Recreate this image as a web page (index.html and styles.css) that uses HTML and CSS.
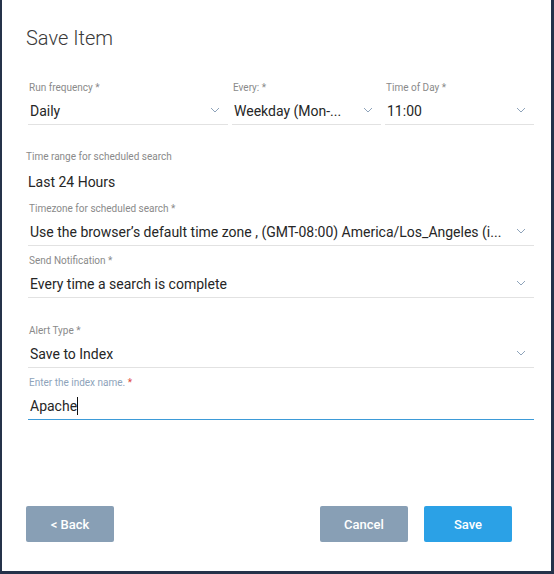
FILE: index.html
```html
<!DOCTYPE html>
<html>
<head>
<meta charset="utf-8">
<link rel="stylesheet" href="styles.css">
</head>
<body>
<div class="dialog">
  <h1 class="title">Save Item</h1>

  <div class="row3">
    <div class="field">
      <div class="label">Run frequency <span class="req">*</span></div>
      <div class="control">
        <span class="value">Daily</span>
        <svg class="chev" width="10" height="6" viewBox="0 0 10 6"><path d="M1 1 L5 5 L9 1" fill="none" stroke="#8ea3ba" stroke-width="1"/></svg>
      </div>
    </div>
    <div class="field">
      <div class="label">Every: <span class="req">*</span></div>
      <div class="control">
        <span class="value">Weekday (Mon-...</span>
        <svg class="chev" width="10" height="6" viewBox="0 0 10 6"><path d="M1 1 L5 5 L9 1" fill="none" stroke="#8ea3ba" stroke-width="1"/></svg>
      </div>
    </div>
    <div class="field">
      <div class="label">Time of Day <span class="req">*</span></div>
      <div class="control">
        <span class="value">11:00</span>
        <svg class="chev" width="10" height="6" viewBox="0 0 10 6"><path d="M1 1 L5 5 L9 1" fill="none" stroke="#8ea3ba" stroke-width="1"/></svg>
      </div>
    </div>
  </div>

  <div class="static">
    <div class="label">Time range for scheduled search</div>
    <div class="static-value">Last 24 Hours</div>
  </div>

  <div class="field field-tz">
    <div class="label">Timezone for scheduled search <span class="req">*</span></div>
    <div class="control">
      <span class="value">Use the browser’s default time zone , (GMT-08:00) America/Los_Angeles (i...</span>
      <svg class="chev" width="10" height="6" viewBox="0 0 10 6"><path d="M1 1 L5 5 L9 1" fill="none" stroke="#8ea3ba" stroke-width="1"/></svg>
    </div>
  </div>

  <div class="field field-notify">
    <div class="label">Send Notification <span class="req">*</span></div>
    <div class="control">
      <span class="value">Every time a search is complete</span>
      <svg class="chev" width="10" height="6" viewBox="0 0 10 6"><path d="M1 1 L5 5 L9 1" fill="none" stroke="#8ea3ba" stroke-width="1"/></svg>
    </div>
  </div>

  <div class="field field-alert">
    <div class="label">Alert Type <span class="req">*</span></div>
    <div class="control">
      <span class="value">Save to Index</span>
      <svg class="chev" width="10" height="6" viewBox="0 0 10 6"><path d="M1 1 L5 5 L9 1" fill="none" stroke="#8ea3ba" stroke-width="1"/></svg>
    </div>
  </div>

  <div class="field field-index focused">
    <div class="label label-focus">Enter the index name. <span class="req-red">*</span></div>
    <div class="control">
      <span class="value">Apache<span class="caret"></span></span>
    </div>
  </div>

  <div class="footer">
    <button class="btn btn-grey">&lt; Back</button>
    <div class="footer-right">
      <button class="btn btn-grey">Cancel</button>
      <button class="btn btn-blue">Save</button>
    </div>
  </div>
</div>
</body>
</html>
```

FILE: styles.css
```css
html, body {
  margin: 0;
  padding: 0;
  background: #25324a;
}

body {
  width: 554px;
  height: 574px;
  font-family: Roboto, "Liberation Sans", sans-serif;
}

.dialog {
  box-sizing: border-box;
  width: 549px;
  height: 571px;
  margin-left: 2px;
  background: #ffffff;
  padding: 26px 17px 0 24px;
  display: flex;
  flex-direction: column;
}

.title {
  margin: 0;
  font-size: 20px;
  line-height: 24px;
  font-weight: 300;
  color: #3a3a3a;
}

.row3 {
  margin-top: 31px;
  margin-left: 2px;
  display: grid;
  grid-template-columns: 200px 149px 149px;
  column-gap: 4px;
}

.field {
  margin-left: 2px;
  border-bottom: 1px solid #e2e2e2;
  padding-bottom: 1px;
}

.row3 .field {
  margin-left: 0;
}

.label {
  font-size: 10px;
  line-height: 14px;
  color: #8a8a8a;
  padding-left: 1px;
  white-space: nowrap;
}

.req {
  color: #8a8a8a;
}

.label-focus {
  color: #8ea3ba;
}

.req-red {
  color: #e0483e;
}

.control {
  margin-top: 4px;
  height: 24px;
  display: flex;
  align-items: center;
}

.value {
  flex: 1;
  min-width: 0;
  font-size: 14px;
  line-height: 24px;
  color: #262626;
  padding-left: 2px;
  white-space: nowrap;
  overflow: hidden;
}

.chev {
  flex: none;
  margin-right: 8px;
  margin-bottom: 3px;
}

.static {
  margin-top: 25px;
}

.static .label {
  padding-left: 0;
}

.static-value {
  margin-top: 6px;
  font-size: 14px;
  line-height: 24px;
  color: #262626;
  padding-left: 2px;
}

.field-tz {
  margin-top: 8px;
}

.field-notify {
  margin-top: 8px;
}

.field-alert {
  margin-top: 26px;
}

.field-index {
  margin-top: 8px;
}

.focused {
  border-bottom-color: #3d9bd8;
}

.caret {
  display: inline-block;
  width: 1px;
  height: 18px;
  background: #111111;
  vertical-align: -4px;
}

.footer {
  margin-top: auto;
  margin-right: 22px;
  padding-bottom: 29px;
  display: flex;
  justify-content: space-between;
}

.footer-right {
  display: flex;
  gap: 16px;
}

.btn {
  width: 88px;
  height: 36px;
  border: none;
  border-radius: 2px;
  font-family: Roboto, "Liberation Sans", sans-serif;
  font-size: 13px;
  font-weight: 500;
  color: #ffffff;
  padding: 0;
}

.btn-grey {
  background: #889fb5;
}

.btn-blue {
  background: #2ba1e6;
}
```
